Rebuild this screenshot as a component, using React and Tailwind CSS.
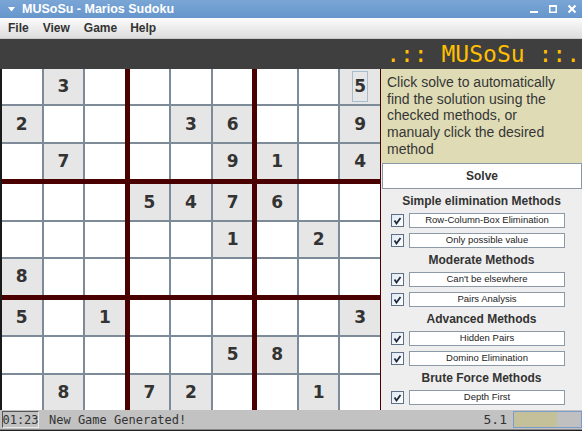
import React from "react";

const GRID = [
  [0, 3, 0, 0, 0, 0, 0, 0, 5],
  [2, 0, 0, 0, 3, 6, 0, 0, 9],
  [0, 7, 0, 0, 0, 9, 1, 0, 4],
  [0, 0, 0, 5, 4, 7, 6, 0, 0],
  [0, 0, 0, 0, 0, 1, 0, 2, 0],
  [8, 0, 0, 0, 0, 0, 0, 0, 0],
  [5, 0, 1, 0, 0, 0, 0, 0, 3],
  [0, 0, 0, 0, 0, 5, 8, 0, 0],
  [0, 8, 0, 7, 2, 0, 0, 1, 0],
];

function Cell({ v, focus }) {
  return (
    <div
      className={`flex items-center justify-center ${v ? "bg-[#e6e6e6]" : "bg-white"}`}
    >
      {v ? (
        <span
          className={`text-[17px] font-bold text-[#333] leading-none ${
            focus ? "outline outline-1 outline-[#a6bccf] px-[1px] py-[6px]" : ""
          }`}
          style={{ fontFamily: '"DejaVu Sans", sans-serif' }}
        >
          {v}
        </span>
      ) : null}
    </div>
  );
}

function Block({ br, bc }) {
  const cells = [];
  for (let r = 0; r < 3; r++) {
    for (let c = 0; c < 3; c++) {
      const R = br * 3 + r;
      const C = bc * 3 + c;
      cells.push(<Cell key={`${r}-${c}`} v={GRID[R][C]} focus={R === 0 && C === 8} />);
    }
  }
  return <div className="grid grid-cols-3 grid-rows-3 gap-[2px] bg-[#7d8b99]">{cells}</div>;
}

function Check() {
  return (
    <div className="w-[13px] h-[13px] border border-[#5d7088] bg-gradient-to-br from-[#dfe8f2] to-[#ffffff] flex items-center justify-center shrink-0">
      <svg width="9" height="9" viewBox="0 0 9 9">
        <path d="M1.5 4.5 L3.5 7.5 L7.5 2" stroke="#1f2a3a" strokeWidth="1.8" fill="none" />
      </svg>
    </div>
  );
}

function Row({ label }) {
  return (
    <div className="flex items-center h-[15px] pl-[10px] gap-[5px]">
      <Check />
      <div
        className="w-[156px] h-[15px] border border-[#8c99a6] bg-white flex items-center justify-center text-[9.5px] text-[#222]"
        style={{ fontFamily: '"Liberation Sans", sans-serif' }}
      >
        {label}
      </div>
    </div>
  );
}

function Header({ children }) {
  return (
    <div className="h-[16px] my-[4px] flex items-center justify-center text-[12px] font-bold text-[#333]">
      {children}
    </div>
  );
}

export default function App() {
  const blocks = [];
  for (let br = 0; br < 3; br++) for (let bc = 0; bc < 3; bc++) blocks.push(<Block key={`${br}${bc}`} br={br} bc={bc} />);
  const sans = { fontFamily: '"Liberation Sans", Arial, sans-serif' };
  const mono = { fontFamily: '"DejaVu Sans Mono", monospace' };
  return (
    <div className="w-[582px] h-[434px] flex flex-col overflow-hidden bg-white" style={sans}>
      {/* title bar */}
      <div className="h-[18px] bg-gradient-to-b from-[#7aa6d6] to-[#6696cc] flex items-center text-white relative">
        <svg className="ml-[8px]" width="7" height="5" viewBox="0 0 7 5">
          <path d="M0 0 H7 L3.5 4.5 Z" fill="#fff" />
        </svg>
        <span className="ml-[7px] text-[12.5px] font-bold">MUSoSu - Marios Sudoku</span>
        <div className="ml-auto flex items-center gap-[10px] mr-[5px]">
          <svg width="9" height="10" viewBox="0 0 9 10">
            <rect x="0" y="7" width="8" height="2" fill="#fff" />
          </svg>
          <svg width="9" height="10" viewBox="0 0 9 10">
            <rect x="0.75" y="1.75" width="6.5" height="6.5" fill="none" stroke="#fff" strokeWidth="1.5" />
            <rect x="0" y="1" width="8" height="2" fill="#fff" />
          </svg>
          <svg width="9" height="10" viewBox="0 0 9 10">
            <path d="M0.5 1.5 L7.5 8.5 M7.5 1.5 L0.5 8.5" stroke="#fff" strokeWidth="2" />
          </svg>
        </div>
      </div>
      {/* menu bar */}
      <div className="h-[21px] bg-gradient-to-b from-[#fbfbfb] to-[#dedede] flex items-center text-[12px] font-bold text-[#333] border-b border-[#c8c8c8]">
        <span className="ml-[8px]">File</span>
        <span className="ml-[14px]">View</span>
        <span className="ml-[14px]">Game</span>
        <span className="ml-[13px]">Help</span>
      </div>
      {/* banner */}
      <div className="h-[30px] bg-[#3f3f3f] flex items-center justify-end pr-[2px]">
        <span className="text-[23px] text-[#ffbf00] leading-none whitespace-pre" style={mono}>
          .:: MUSoSu ::.
        </span>
      </div>
      {/* main */}
      <div className="h-[341px] flex">
        <div className="w-[2px] bg-[#1a1a1a]" />
        <div className="w-[378px] grid grid-cols-3 grid-rows-3 gap-[5px] bg-[#4a0000]">{blocks}</div>
        <div className="w-[202px] flex flex-col bg-[#eeeeee] border-l border-[#4a0000]">
          <div className="h-[94px] bg-[#dfdcb5] pl-[6px] pr-[16px] pt-[5px] text-[14px] leading-[16.7px] text-[#353535]">
            Click solve to automatically find the solution using the checked methods, or manualy click the desired method
          </div>
          <div className="h-[26px] ml-[1px] bg-white border border-[#8a98a6] flex items-center justify-center text-[12px] font-bold text-[#333]">
            Solve
          </div>
          <Header>Simple elimination Methods</Header>
          <div className="flex flex-col gap-[5px]">
            <Row label="Row-Column-Box Elimination" />
            <Row label="Only possible value" />
          </div>
          <Header>Moderate Methods</Header>
          <div className="flex flex-col gap-[5px]">
            <Row label="Can't be elsewhere" />
            <Row label="Pairs Analysis" />
          </div>
          <Header>Advanced Methods</Header>
          <div className="flex flex-col gap-[5px]">
            <Row label="Hidden Pairs" />
            <Row label="Domino Elimination" />
          </div>
          <Header>Brute Force Methods</Header>
          <div className="flex flex-col gap-[5px]">
            <Row label="Depth First" />
          </div>
        </div>
      </div>
      {/* status bar */}
      <div className="h-[19px] bg-[#c2c2c2] flex items-center text-[#333]">
        <div className="ml-[2px] w-[37px] h-[17px] border border-[#555] border-r-[#e8e8e8] border-b-[#e8e8e8] flex items-center justify-center text-[12px]" style={mono}>
          01:23
        </div>
        <span className="ml-[10px] text-[12px]" style={mono}>New Game Generated!</span>
        <span className="ml-auto mr-[6px] text-[13px]" style={mono}>5.1</span>
        <div className="w-[69px] h-[17px] border border-[#7b9ccc] bg-[#c0c0c0] flex">
          <div className="w-[43px] h-full bg-[#c4c19a]" />
        </div>
      </div>
      <div className="h-[1px] bg-[#888]" />
      <div className="h-[1px] bg-[#222]" />
      <div className="flex-1 bg-white" />
    </div>
  );
}
